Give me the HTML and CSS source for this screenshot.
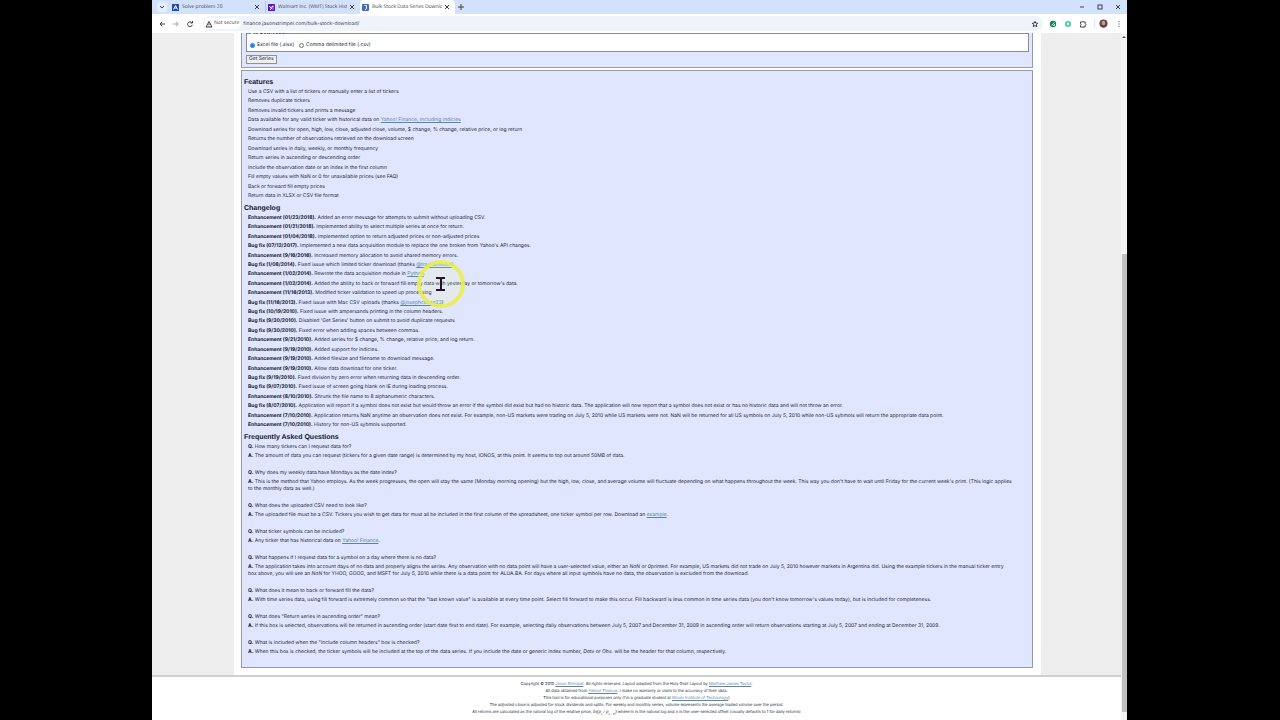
FILE: index.html
```html
<!DOCTYPE html>
<html lang="en">
<head>
  <meta charset="UTF-8">
  <meta name="viewport" content="width=device-width, initial-scale=1.0">
  <title>Bulk Stock Data Series Download</title>
  <link rel="stylesheet" href="styles.css">
</head>
<body>

  <div class="window">
    <!-- Tab strip -->
    <div class="tab-strip">
      <button class="tab-search" aria-label="Search tabs">
        <svg viewBox="0 0 8 8"><path d="M2 3l2 2 2-2"/></svg>
      </button>
      <div class="tab">
        <svg class="favicon" viewBox="0 0 14 14"><rect width="14" height="14" rx="1" fill="#1d4f9c"/><path d="M3 11L7 3l4 8M5 8h4" fill="none" stroke="#fff" stroke-width="2"/></svg>
        <span class="tab-title">Solve problem 20</span>
        <button class="close" aria-label="Close tab"><svg viewBox="0 0 8 8"><path d="M2 2l4 4M6 2l-4 4"/></svg></button>
      </div>
      <div class="tab divided">
        <svg class="favicon" viewBox="0 0 14 14"><rect width="14" height="14" rx="1" fill="#5b12c4"/><path d="M3 4l3 5M9 4l-4 8M10 3v4M10 9v2" fill="none" stroke="#fff" stroke-width="2"/></svg>
        <span class="tab-title">Walmart Inc. (WMT) Stock Hist</span>
        <button class="close" aria-label="Close tab"><svg viewBox="0 0 8 8"><path d="M2 2l4 4M6 2l-4 4"/></svg></button>
      </div>
      <div class="tab active">
        <svg class="favicon" viewBox="0 0 14 14"><rect width="14" height="14" rx="2" fill="#4468c8"/><path d="M5 3h4v6q0 2-3 2" fill="none" stroke="#fff" stroke-width="2"/></svg>
        <span class="tab-title">Bulk Stock Data Series Downlo</span>
        <button class="close" aria-label="Close tab"><svg viewBox="0 0 8 8"><path d="M2 2l4 4M6 2l-4 4"/></svg></button>
      </div>
      <button class="new-tab" aria-label="New tab"><svg viewBox="0 0 8 8"><path d="M4 1v6M1 4h6"/></svg></button>
      <div class="window-buttons">
        <button aria-label="Minimize"><svg viewBox="0 0 8 8"><path d="M2 4h4"/></svg></button>
        <button aria-label="Maximize"><svg viewBox="0 0 8 8"><rect x="2" y="2" width="4" height="4"/></svg></button>
        <button aria-label="Close"><svg viewBox="0 0 8 8"><path d="M2 2l4 4M6 2l-4 4"/></svg></button>
      </div>
    </div>

    <!-- Toolbar -->
    <div class="toolbar">
      <button aria-label="Back"><svg viewBox="0 0 8 8"><path d="M7 4H2M4 2L2 4l2 2"/></svg></button>
      <button class="dim" aria-label="Forward"><svg viewBox="0 0 8 8"><path d="M1 4h5M4 2l2 2-2 2"/></svg></button>
      <button aria-label="Reload"><svg viewBox="0 0 8 8"><path d="M6 3a2.4 2.4 0 1 0 .3 1.8M6.5 1v2h-2"/></svg></button>
      <div class="address">
        <button class="not-secure"><svg viewBox="0 0 8 8"><path d="M4 1.5L7 7H1zM4 3.5v1.7M4 5.8v.5"/></svg>Not secure</button>
        <input class="url" type="text" aria-label="Address" value="finance.jasonstrimpel.com/bulk-stock-download/">
        <button aria-label="Bookmark"><svg viewBox="0 0 8 8"><path d="M4 1.3l.8 1.8 2 .2-1.5 1.3.5 2L4 5.6 2.2 6.6l.5-2L1.2 3.3l2-.2z"/></svg></button>
      </div>
      <div class="extensions">
        <button aria-label="Extension"><svg viewBox="0 0 8 8"><circle cx="4" cy="4" r="3.2" fill="#16805c" stroke="none"/><path d="M2.5 5.5l3-3M4 5.5h1.5V4" stroke="#d5efe4"/></svg></button>
        <button aria-label="Assistant"><svg viewBox="0 0 8 8"><circle cx="4" cy="4" r="2.2" stroke="#35cf9b" stroke-width="1.6" fill="#e5fff6"/></svg></button>
        <button aria-label="Extensions"><svg viewBox="0 0 8 8"><path d="M1.5 2h1.7q.8-1.5 1.6 0h1.4v1.6q1.4.7 0 1.5V7H1.5V5.3q1-.8 0-1.6z"/></svg></button>
        <button class="profile" aria-label="Profile"><svg viewBox="0 0 10 10"><circle cx="5" cy="5" r="4.5" fill="#5b4b49" stroke="none"/><ellipse cx="5" cy="4.5" rx="2" ry="2.6" fill="#cf9c8c" stroke="none"/><path d="M2 8q3-2 6 0-3 3-6 0" fill="#78302f" stroke="none"/></svg></button>
        <button aria-label="Menu"><svg viewBox="0 0 8 8"><path d="M4 1v1M4 3.5v1M4 6v1"/></svg></button>
      </div>
    </div>

    <!-- Page -->
    <div class="viewport">
      <div class="page">
        <div class="columns">
          <main class="content">
            <form class="box download">
              <fieldset>
                <legend>File Download</legend>
                <input type="radio" name="format" id="xlsx" checked>
                <label for="xlsx">Excel file (.xlsx)</label>
                <input type="radio" name="format" id="csv">
                <label for="csv">Comma delimited file (.csv)</label>
              </fieldset>
              <button type="button" class="get-series">Get Series</button>
            </form>

            <div class="box info">
              <h2>Features</h2>
              <ul class="features">
                <li>Use a CSV with a list of tickers or manually enter a list of tickers</li>
                <li>Removes duplicate tickers</li>
                <li>Removes invalid tickers and prints a message</li>
                <li>Data available for any valid ticker with historical data on <a href="#">Yahoo! Finance, including indicies</a></li>
                <li>Download series for open, high, low, close, adjusted close, volume, $ change, % change, relative price, or log return</li>
                <li>Returns the number of observations retrieved on the download screen</li>
                <li>Download series in daily, weekly, or monthly frequency</li>
                <li>Return series in ascending or descending order</li>
                <li>Include the observation date or an index in the first column</li>
                <li>Fill empty values with NaN or 0 for unavailable prices (see FAQ)</li>
                <li>Back or forward fill empty prices</li>
                <li>Return data in XLSX or CSV file format</li>
              </ul>

              <h2>Changelog</h2>
              <ul class="changelog">
                <li><b>Enhancement (01/23/2018).</b> Added an error message for attempts to submit without uploading CSV.</li>
                <li><b>Enhancement (01/21/2018).</b> Implemented ability to select multiple series at once for return.</li>
                <li><b>Enhancement (01/04/2018).</b> Implemented option to return adjusted prices or non-adjusted prices</li>
                <li><b>Bug fix (07/12/2017).</b> Implemented a new data acquisition module to replace the one broken from Yahoo's API changes.</li>
                <li><b>Enhancement (9/16/2016).</b> Increased memory allocation to avoid shared memory errors.</li>
                <li><b>Bug fix (1/08/2014).</b> Fixed issue which limited ticker download (thanks <a href="#">@traxhamboxx</a>)</li>
                <li><b>Enhancement (1/02/2014).</b> Rewrote the data acquisition module in <a href="#">Python</a>.</li>
                <li><b>Enhancement (1/02/2014).</b> Added the ability to back or forward fill empty data with yesterday or tomorrow's data.</li>
                <li><b>Enhancement (11/16/2013).</b> Modified ticker validation to speed up processing</li>
                <li><b>Bug fix (11/16/2013).</b> Fixed issue with Mac CSV uploads (thanks <a href="#">@josephcohen23</a>)</li>
                <li><b>Bug fix (10/19/2010).</b> Fixed issue with ampersands printing in the column headers.</li>
                <li><b>Bug fix (9/30/2010).</b> Disabled 'Get Series' button on submit to avoid duplicate requests</li>
                <li><b>Bug fix (9/30/2010).</b> Fixed error when adding spaces between commas.</li>
                <li><b>Enhancement (9/21/2010).</b> Added series for $ change, % change, relative price, and log return.</li>
                <li><b>Enhancement (9/19/2010).</b> Added support for indicies.</li>
                <li><b>Enhancement (9/19/2010).</b> Added filesize and filename to download message.</li>
                <li><b>Enhancement (9/19/2010).</b> Allow data download for one ticker.</li>
                <li><b>Bug fix (9/19/2010).</b> Fixed division by zero error when returning data in descending order.</li>
                <li><b>Bug fix (9/07/2010).</b> Fixed issue of screen going blank on IE during loading process.</li>
                <li><b>Enhancement (8/10/2010).</b> Shrunk the file name to 8 alphanumeric characters.</li>
                <li><b>Bug fix (8/07/2010).</b> Application will report if a symbol does not exist but would throw an error if the symbol did exist but had no historic data. The application will now report that a symbol does not exist or has no historic data and will not throw an error.</li>
                <li><b>Enhancement (7/10/2010).</b> Application returns NaN anytime an observation does not exist. For example, non-US markets were trading on July 5, 2010 while US markets were not. NaN will be returned for all US symbols on July 5, 2010 while non-US sybmols will return the appropriate data point.</li>
                <li><b>Enhancement (7/10/2010).</b> History for non-US sybmols supported.</li>
              </ul>

              <h2>Frequently Asked Questions</h2>
              <dl class="faq">
                <dt><b>Q.</b> How many tickers can I request data for?</dt>
                <dd><b>A.</b> The amount of data you can request (tickers for a given date range) is determined by my host, IONOS, at this point. It seems to top out around 50MB of data.</dd>
                <dt><b>Q.</b> Why does my weekly data have Mondays as the date index?</dt>
                <dd><b>A.</b> This is the method that Yahoo employs. As the week progresses, the open will stay the same (Monday morning opening) but the high, low, close, and average volume will fluctuate depending on what happens throughout the week. This way you don't have to wait until Friday for the current week's print. (This logic applies to the monthly data as well.)</dd>
                <dt><b>Q.</b> What does the uploaded CSV need to look like?</dt>
                <dd><b>A.</b> The uploaded file must be a CSV. Tickers you wish to get data for must all be included in the first column of the spreadsheet, one ticker symbol per row. Download an <a href="#">example</a>.</dd>
                <dt><b>Q.</b> What ticker symbols can be included?</dt>
                <dd><b>A.</b> Any ticker that has historical data on <a href="#">Yahoo! Finance</a>.</dd>
                <dt><b>Q.</b> What happens if I request data for a symbol on a day where there is no data?</dt>
                <dd><b>A.</b> The application takes into account days of no data and properly aligns the series. Any observation with no data point will have a user-selected value, either an <i>NaN</i> or <i>0</i>printed. For example, US markets did not trade on July 5, 2010 however markets in Argentina did. Using the example tickers in the manual ticker entry box above, you will see an <i>NaN</i> for YHOO, GOOG, and MSFT for July 5, 2010 while there is a data point for ALUA.BA. For days where all input symbols have no data, the observation is excluded from the download.</dd>
                <dt><b>Q.</b> What does it mean to back or forward fill the data?</dt>
                <dd><b>A.</b> With time series data, using fill forward is extremely common so that the "last known value" is available at every time point. Select fill forward to make this occur. Fill backward is less common in time series data (you don't know tomorrow's values today), but is included for completeness.</dd>
                <dt><b>Q.</b> What does "Return series in ascending order" mean?</dt>
                <dd><b>A.</b> If this box is selected, observations will be returned in ascending order (start date first to end date). For example, selecting daily observations between July 5, 2007 and December 31, 2009 in ascending order will return observations starting at July 5, 2007 and ending at December 31, 2009.</dd>
                <dt><b>Q.</b> What is included when the "Include column headers" box is checked?</dt>
                <dd><b>A.</b> When this box is checked, the ticker symbols will be included at the top of the data series. If you include the date or generic index number, <i>Date</i> or <i>Obs.</i> will be the header for that column, respectively.</dd>
              </dl>
            </div>
          </main>
        </div>

        <footer class="footer">
          <p>Copyright © 2010 <a href="#">Jason Strimpel</a>. All rights reserved. Layout adapted from the Holy Grail Layout by <a href="#">Matthew James Taylor</a>.</p>
          <p>All data obtained from <a href="#">Yahoo! Finance</a>. I make no warranty or claim to the accuracy of their data.</p>
          <p>This tool is for educational purposes only (I'm a graduate student at <a href="#">Illinois Institute of Technology</a>)</p>
          <p>The adjusted close is adjusted for stock dividends and splits. For weekly and monthly series, volume represents the average traded volume over the period.</p>
          <p>All returns are calculated as the natural log of the relative price, <i class="formula">ln(p<sub>t</sub> / p<sub>t - n</sub>)</i> where ln is the natural log and n is the user-selected offset (usually defaults to 1 for daily returns)</p>
        </footer>
      </div>
      <div class="scrollbar">
        <span class="arrow"></span>
        <span class="thumb"></span>
      </div>
    </div>
  </div>

  <!-- Highlighted text cursor -->
  <svg class="cursor" viewBox="0 0 50 50"><circle cx="25" cy="25" r="22" fill="#ffff80" fill-opacity=".12" stroke="#e9ee4c" stroke-opacity=".9" stroke-width="4"/><path d="M20 19h4l1 1 1-1h3M20 31h4l1-1 1 1h3M25 20v11" fill="none" stroke="#21122e" stroke-width="2"/></svg>

</body>
</html>
```
FILE: styles.css
```css
* {
  box-sizing: border-box;
}
body {
  margin: 0;
  padding: 0 153px 0 152px;
  background: #000;
  color: #22273a;
  font-family: Inter, "Liberation Sans", sans-serif;
  font-size: 5px;
  line-height: 7px;
  text-rendering: geometricPrecision;
}
.window {
  display: flex;
  flex-direction: column;
  height: 100vh;
  background: #fff;
}
button {
  display: flex;
  align-items: center;
  justify-content: center;
  margin: 0;
  padding: 0;
  border: none;
  background: none;
  color: inherit;
  font: inherit;
  text-rendering: inherit;
}
button svg {
  width: 8px;
  height: 8px;
  fill: none;
  stroke: #3c4043;
  stroke-width: 1;
}

/* browser bars */
.tab-strip,
.toolbar {
  display: flex;
  align-items: center;
  flex-shrink: 0;
  font-family: "Open Sans", sans-serif;
  color: #3c4657;
}
.tab-strip {
  height: 14px;
  padding-left: 5px;
  background: #d2e2fc;
}
.tab-search {
  width: 10px;
  height: 10px;
  margin-right: 3px;
  border-radius: 3px;
  background: #e4eefd;
}
.tab {
  display: flex;
  align-items: center;
  gap: 3px;
  width: 95px;
  height: 12px;
  padding: 0 4px 0 2px;
}
.tab.divided {
  border-left: 1px solid #b4c6e4;
}
.tab.active {
  height: 14px;
  border-radius: 4px 4px 0 0;
  background: #fff;
}
.favicon {
  flex-shrink: 0;
  width: 7px;
  height: 7px;
}
.tab-title {
  flex: 1;
  overflow: hidden;
  white-space: nowrap;
}
.new-tab {
  margin-left: 2px;
}
.tab .close {
  margin-left: -2px;
}
.window-buttons {
  display: flex;
  gap: 10px;
  margin-left: auto;
  padding-right: 5px;
}
.toolbar {
  height: 19px;
  gap: 6px;
  padding: 0 4px 0 6px;
}
.toolbar .dim svg {
  stroke: #a3a7ac;
}
.address {
  display: flex;
  align-items: center;
  flex: 1;
  height: 15px;
  margin-left: 3px;
  padding: 0 4px 0 1px;
  border-radius: 8px;
  background: #eff3fa;
}
.not-secure {
  gap: 1px;
  height: 11px;
  padding: 0 2px 0 1px;
  border-radius: 6px;
  background: #fff;
}
.url {
  flex: 1;
  margin-left: 2px;
  padding: 0;
  border: none;
  background: none;
  color: #3c4657;
  font-family: Inter, sans-serif;
  font-size: 5px;
  text-rendering: inherit;
}
.extensions {
  display: flex;
  align-items: center;
  gap: 7px;
}
.profile {
  padding-left: 4px;
  border-left: 1px solid #e2e8f2;
}
.profile svg {
  width: 9px;
  height: 9px;
}

/* page */
.viewport {
  display: flex;
  flex: 1;
  min-height: 0;
  overflow: hidden;
}
.page {
  flex: 1;
}
.columns {
  padding: 0 80px 0 82px;
  background: #eee;
}
.content {
  padding: 0 8px 7px 7px;
  background: #fff;
}
.box {
  border: 1px solid #969aaa;
  background: #e0e6fd;
}
.download {
  padding: 0 3px 3px 4px;
  border-top: none;
}
fieldset {
  display: flex;
  align-items: center;
  margin: -3px 0 0;
  padding: 5px 3px 2px;
  border: 1px solid #868c9c;
  background: #fff;
}
legend {
  padding: 0;
  font-weight: bold;
}
fieldset input {
  width: 5px;
  height: 5px;
  margin: 0 2px 0 0;
}
fieldset label {
  margin-right: 5px;
}
.get-series {
  height: 9px;
  margin-top: 3px;
  padding: 0 2px;
  border: 1px solid #8d9292;
  background: #efefef;
}
.info {
  margin-top: 2px;
  padding: 8px 2px 11px;
}
h2 {
  margin: 0 0 2px;
  color: #12162a;
  font-family: "Liberation Sans", Arial, sans-serif;
  font-size: 7px;
  line-height: 8px;
}
ul,
dl {
  margin: 0;
  padding: 0 0 0 4px;
  list-style: none;
}
ul {
  display: flex;
  flex-direction: column;
  justify-content: space-between;
  margin-bottom: 5px;
}
.features {
  min-height: 111px;
}
.changelog {
  min-height: 214px;
}
b {
  color: #12162a;
}
a {
  color: #5a83a6;
}
dt {
  margin-bottom: 2px;
}
dd {
  margin: 0 0 10px;
  padding-right: 17px;
}
dd:last-child {
  margin-bottom: 0;
}
.footer {
  padding-top: 3px;
  border-top: 2px solid #d0d0d0;
  background: #fff;
  font-size: 4px;
  text-align: center;
}
.footer p {
  margin: 0;
}
.formula {
  font-family: "Liberation Serif", serif;
  font-size: 5px;
}
sub {
  font-size: 4px;
  line-height: 0;
}
.scrollbar {
  display: flex;
  flex-direction: column;
  align-items: center;
  width: 6px;
  background: #f4f4f4;
}
.arrow {
  margin-top: 3px;
  border: 2px solid transparent;
  border-top: none;
  border-bottom-color: #555;
}
.thumb {
  width: 5px;
  flex: 1;
  margin: 216px 0 8px;
  background: #c1c1c1;
}
.cursor {
  position: absolute;
  left: 416px;
  top: 259px;
  width: 50px;
  height: 50px;
}
```
